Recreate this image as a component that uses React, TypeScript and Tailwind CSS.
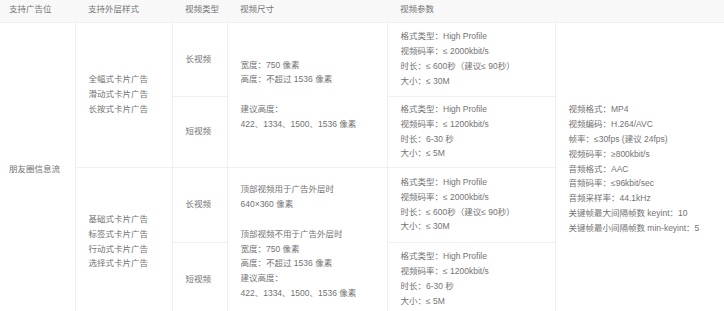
const headers = ['支持广告位', '支持外层样式', '视频类型', '视频尺寸', '视频参数']

const longParams = ['格式类型：High Profile', '视频码率：≤ 2000kbit/s', '时长：≤ 600秒（建议≤ 90秒）', '大小：≤ 30M']
const shortParams = ['格式类型：High Profile', '视频码率：≤ 1200kbit/s', '时长：6-30 秒', '大小：≤ 5M']

const common = [
  '视频格式：MP4',
  '视频编码：H.264/AVC',
  '帧率：≤30fps (建议 24fps)',
  '视频码率：≥800kbit/s',
  '音频格式：AAC',
  '音频码率：≤96kbit/sec',
  '音频采样率：44.1kHz',
  '关键帧最大间隔帧数 keyint：10',
  '关键帧最小间隔帧数 min-keyint：5',
]

function Lines({ items }: { items: string[] }) {
  return (
    <>
      {items.map((t, i) => (
        <div key={i} className="whitespace-nowrap">{t || '\u00a0'}</div>
      ))}
    </>
  )
}

const td = 'border-l border-b border-[#f0f0f0] px-[13px] align-middle'

export default function App() {
  return (
    <div
      className="w-[724px] h-[311px] overflow-hidden bg-white text-[#737373] text-[8.5px] leading-[14.8px]"
      style={{ fontFamily: '"Liberation Sans", "Noto Sans CJK SC", sans-serif' }}
    >
      <table className="w-[724px] table-fixed border-collapse">
        <colgroup>
          <col className="w-[75px]" />
          <col className="w-[97px]" />
          <col className="w-[55px]" />
          <col className="w-[160px]" />
          <col className="w-[168px]" />
          <col className="w-[169px]" />
        </colgroup>
        <thead>
          <tr className="h-[22px] bg-[#f8f8f8]">
            {headers.map((h, i) => (
              <th
                key={h}
                className={`${i === 0 ? 'pl-[9px]' : 'pl-[13px]'} pt-[2px] text-left font-normal align-top border-b border-[#f0f0f0]`}
              >
                {h}
              </th>
            ))}
            <th className="border-b border-[#f0f0f0]" />
          </tr>
        </thead>
        <tbody>
          <tr className="h-[74px]">
            <td rowSpan={4} className="border-b border-[#f0f0f0] pl-[9px] pr-2 align-middle">朋友圈信息流</td>
            <td rowSpan={2} className={td}>
              <Lines items={['全幅式卡片广告', '滑动式卡片广告', '长按式卡片广告']} />
            </td>
            <td className={td}>长视频</td>
            <td rowSpan={2} className={td}>
              <Lines items={['宽度：750 像素', '高度：不超过 1536 像素', '', '建议高度：', '422、1334、1500、1536 像素']} />
            </td>
            <td className={td}>
              <Lines items={longParams} />
            </td>
            <td rowSpan={4} className={td}>
              <Lines items={common} />
            </td>
          </tr>
          <tr className="h-[71px]">
            <td className={td}>短视频</td>
            <td className={td}>
              <Lines items={shortParams} />
            </td>
          </tr>
          <tr className="h-[75px]">
            <td rowSpan={2} className={td}>
              <Lines items={['基础式卡片广告', '标签式卡片广告', '行动式卡片广告', '选择式卡片广告']} />
            </td>
            <td className={td}>长视频</td>
            <td rowSpan={2} className={td}>
              <Lines
                items={[
                  '顶部视频用于广告外层时',
                  '640×360 像素',
                  '',
                  '顶部视频不用于广告外层时',
                  '宽度：750 像素',
                  '高度：不超过 1536 像素',
                  '建议高度：',
                  '422、1334、1500、1536 像素',
                ]}
              />
            </td>
            <td className={td}>
              <Lines items={longParams} />
            </td>
          </tr>
          <tr className="h-[74px]">
            <td className={td}>短视频</td>
            <td className={td}>
              <Lines items={shortParams} />
            </td>
          </tr>
        </tbody>
      </table>
    </div>
  )
}
